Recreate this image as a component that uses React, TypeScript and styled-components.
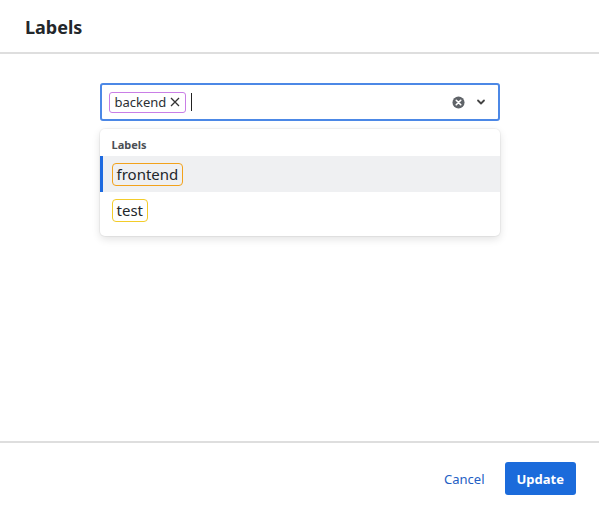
import styled, { createGlobalStyle } from "styled-components"

const Global = createGlobalStyle`
  html, body { margin: 0; padding: 0; background: #fff; }
  body { font-family: "Noto Sans", "Open Sans", sans-serif; color: #1f2328; }
`

type ChipProps = { $tone: string }

const App = () => {
  return (
    <>
      <Global />
      <Modal>
        <Header>
          <Title>Labels</Title>
        </Header>
        <Body>
          <Field>
            <Chip $tone="#c97ee6">
              backend
              <Remove>
                <svg width="10" height="10" viewBox="0 0 10 10">
                  <path d="M1 1 L9 9 M9 1 L1 9" stroke="#333" strokeWidth="1.3" />
                </svg>
              </Remove>
            </Chip>
            <Caret />
            <Controls>
              <svg width="13" height="13" viewBox="0 0 14 14">
                <circle cx="7" cy="7" r="6.5" fill="#5f6368" />
                <path d="M4.6 4.6 L9.4 9.4 M9.4 4.6 L4.6 9.4" stroke="#fff" strokeWidth="1.8" strokeLinecap="round" />
              </svg>
              <svg width="10" height="10" viewBox="0 0 10 10">
                <path d="M2 3.5 L5 6.5 L8 3.5" stroke="#444" strokeWidth="1.8" fill="none" strokeLinecap="round" strokeLinejoin="round" />
              </svg>
            </Controls>
          </Field>
          <Menu>
            <GroupTitle>Labels</GroupTitle>
            <Option $active>
              <OptionChip $tone="#f2a21c">frontend</OptionChip>
            </Option>
            <Option>
              <OptionChip $tone="#f3cc2a">test</OptionChip>
            </Option>
          </Menu>
        </Body>
        <Footer>
          <LinkButton>Cancel</LinkButton>
          <PrimaryButton>Update</PrimaryButton>
        </Footer>
      </Modal>
    </>
  )
}

const Modal = styled.div`
  width: 599px;
  height: 519px;
  display: flex;
  flex-direction: column;
  background: #fff;
  border-radius: 4px 0 0 0;
`

const Header = styled.div`
  padding: 1px 25px 0;
  display: flex;
  align-items: center;
  border-bottom: 2px solid #dedede;
  box-sizing: border-box;
  height: 54px;
`

const Title = styled.h2`
  margin: 0;
  font-size: 18px;
  font-weight: 700;
  color: #23272b;
`

const Body = styled.div`
  flex: 1;
  padding-top: 29px;
  display: flex;
  flex-direction: column;
  align-items: center;
`

const Field = styled.div`
  width: 400px;
  height: 38px;
  box-sizing: border-box;
  border: 2px solid #4c88e6;
  border-radius: 3px;
  display: flex;
  align-items: center;
  padding: 0 12px 0 7px;
  gap: 4px;
`

const Chip = styled.span<ChipProps>`
  display: inline-flex;
  align-items: center;
  gap: 4px;
  height: 21px;
  box-sizing: border-box;
  padding: 0 5px 0 5px;
  border: 1px solid ${(p) => p.$tone};
  border-radius: 3px;
  font-size: 13px;
  color: #2b2f33;
`

const Remove = styled.span`
  display: inline-flex;
  align-items: center;
`

const Caret = styled.span`
  width: 1px;
  height: 18px;
  background: #222;
  margin-left: 1px;
`

const Controls = styled.div`
  margin-left: auto;
  display: flex;
  align-items: center;
  gap: 11px;
`

const Menu = styled.div`
  width: 400px;
  margin-top: 8px;
  background: #fff;
  border-radius: 5px;
  box-shadow: 0 0 0 1px rgba(0, 0, 0, 0.04), 0 3px 8px rgba(0, 0, 0, 0.12);
  padding: 4px 0 8px;
`

const GroupTitle = styled.div`
  font-size: 11px;
  font-weight: 700;
  color: #4b4f54;
  padding: 4px 12px 4px;
`

const Option = styled.div<{ $active?: boolean }>`
  height: 36px;
  display: flex;
  align-items: center;
  box-sizing: border-box;
  background: ${(p) => (p.$active ? "#eff0f2" : "transparent")};
  border-left: 3px solid ${(p) => (p.$active ? "#1d6ae0" : "transparent")};
  padding-left: 9px;
`

const OptionChip = styled.span<ChipProps>`
  display: inline-flex;
  align-items: center;
  height: 23px;
  box-sizing: border-box;
  padding: 0 4px;
  border: 1px solid ${(p) => p.$tone};
  border-radius: 4px;
  font-size: 15px;
  color: #23272b;
`

const Footer = styled.div`
  height: 78px;
  box-sizing: border-box;
  border-top: 2px solid #dedede;
  display: flex;
  align-items: flex-start;
  justify-content: flex-end;
  padding: 19px 23px 0 0;
  gap: 20px;
`

const LinkButton = styled.button`
  background: none;
  border: none;
  font-family: inherit;
  font-size: 13px;
  color: #2360c4;
  height: 33px;
  padding: 0;
  cursor: pointer;
`

const PrimaryButton = styled.button`
  background: #1b6bdb;
  border: none;
  border-radius: 3px;
  color: #fff;
  font-family: inherit;
  font-weight: 700;
  font-size: 13px;
  height: 33px;
  padding: 0 12px;
  cursor: pointer;
`

export default App
